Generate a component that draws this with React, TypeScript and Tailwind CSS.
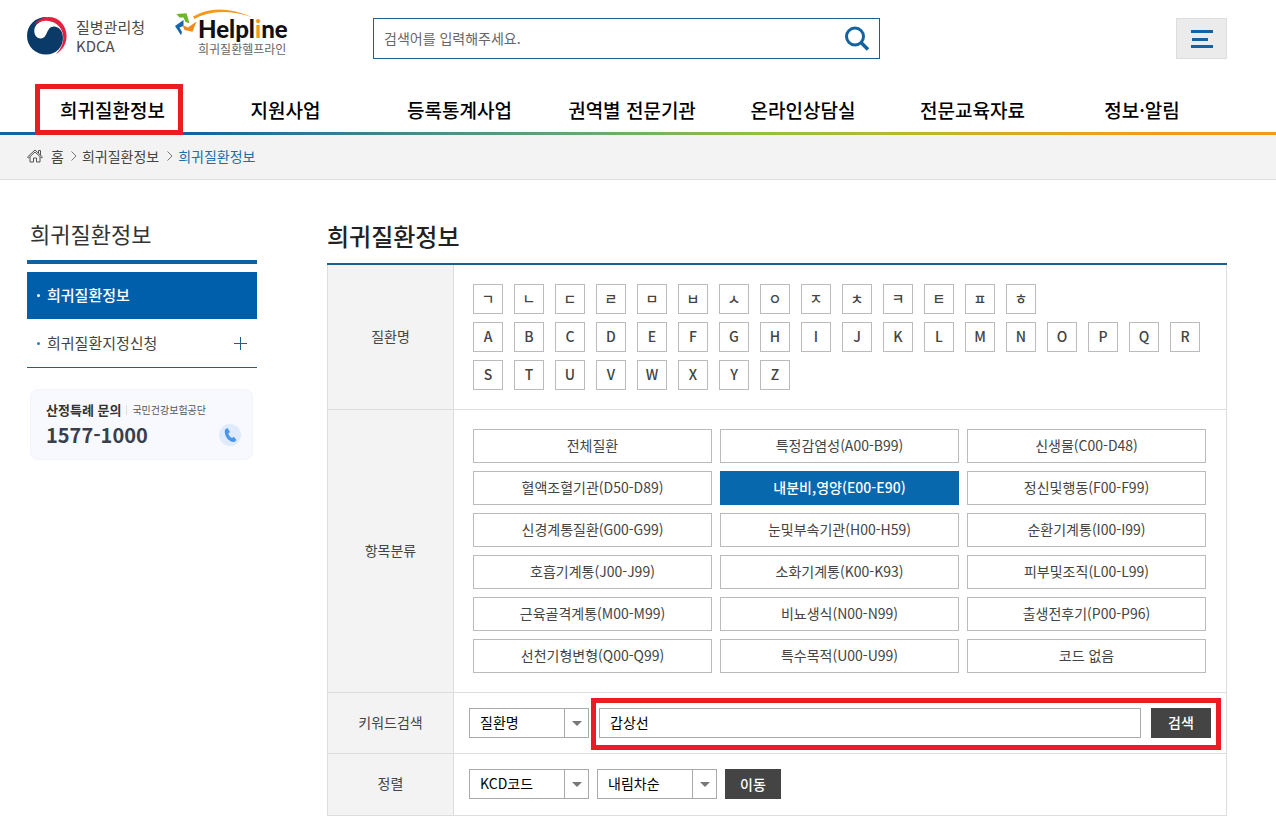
import { type ReactNode } from "react";

const NAV = [
  "희귀질환정보",
  "지원사업",
  "등록통계사업",
  "권역별 전문기관",
  "온라인상담실",
  "전문교육자료",
  "정보·알림",
];

const LETTER_ROWS = ["ㄱㄴㄷㄹㅁㅂㅅㅇㅈㅊㅋㅌㅍㅎ", "ABCDEFGHIJKLMNOPQR", "STUVWXYZ"];

const CATEGORIES = [
  "전체질환",
  "특정감염성(A00-B99)",
  "신생물(C00-D48)",
  "혈액조혈기관(D50-D89)",
  "내분비,영양(E00-E90)",
  "정신및행동(F00-F99)",
  "신경계통질환(G00-G99)",
  "눈및부속기관(H00-H59)",
  "순환기계통(I00-I99)",
  "호흡기계통(J00-J99)",
  "소화기계통(K00-K93)",
  "피부및조직(L00-L99)",
  "근육골격계통(M00-M99)",
  "비뇨생식(N00-N99)",
  "출생전후기(P00-P96)",
  "선천기형변형(Q00-Q99)",
  "특수목적(U00-U99)",
  "코드 없음",
];

const ACTIVE_CATEGORY = "내분비,영양(E00-E90)";

function KdcaLogo() {
  return (
    <a href="#" className="flex items-center gap-[9px]">
      <svg viewBox="0 0 40 40" className="size-10" aria-hidden="true">
        <path
          d="M20 1C8 1 0 9 0 20C0 31 9 38.5 19 38.5C29 38.5 36 31 36 22C36 14 31 10.5 27 10.5C19 10.5 21 22 14 22.5C8 22.5 6 16 8 11C10 7 14 5 18 4Z"
          fill="#0a3a68"
        />
        <path d="M7 9C13 0 26-2 34 6C43 16 41 31 29 38C38 29 39 16 30 8.5C23 3 13 4 7 9Z" fill="#e6213f" />
      </svg>
      <span className="flex flex-col text-[15px] leading-[19px] text-[#4a4a4a]">
        <span>질병관리청</span>
        <span>KDCA</span>
      </span>
    </a>
  );
}

function HelplineLogo() {
  return (
    <a href="#" className="relative block pt-[6px] pl-[26px]">
      <svg viewBox="0 0 120 48" className="absolute top-0 left-0 h-12 w-[120px] overflow-visible" aria-hidden="true">
        <path d="M21 6.500Q46-8 81 7.500Q46-4 22.500 9Z" fill="#f39a1d" />
        <path d="M4.500 4L14.500 3.300L17.500 13.300L13.500 12L11.500 7.500L7.500 7.500Z" fill="#6fb52c" />
        <path d="M11.500 10L3 16L9 25.300L10 22L7.500 17.500L11.500 16Z" fill="#1566ae" />
        <path d="M10.500 15L16 17.500L24.500 11.500L20.500 21.700L12.500 20Z" fill="#f08a1c" />
      </svg>
      <span className="block font-['Lato'] text-[24px] leading-[26px] font-black text-[#111]">
        Helpl<span className="text-[#f39a1d]">i</span>ne
      </span>
      <span className="block text-[12px] leading-[14px] text-[#666]">희귀질환헬프라인</span>
    </a>
  );
}

function Header() {
  return (
    <header>
      <div className="flex h-[84px] items-start pr-[49px] pl-[27px]">
        <div className="flex w-[346px] gap-[27px]">
          <div className="pt-4">
            <KdcaLogo />
          </div>
          <div className="pt-[10px]">
            <HelplineLogo />
          </div>
        </div>
        <form className="mt-[18px] flex h-[41px] w-[507px] items-center border border-[#1b5f8c]">
          <input
            type="text"
            aria-label="검색어"
            placeholder="검색어를 입력해주세요."
            className="h-full min-w-0 flex-1 px-[10px] pb-[2px] text-[14px] outline-none placeholder:text-[#666]"
          />
          <button type="button" aria-label="검색" className="pr-[9px] pl-[11px]">
            <svg viewBox="0 0 26 26" className="size-[26px]" fill="none" stroke="#1463a0" aria-hidden="true">
              <circle cx="11" cy="10.500" r="8.500" strokeWidth="3" />
              <path d="M17 16.500L24 23.500" strokeWidth="3.500" />
            </svg>
          </button>
        </form>
        <button
          type="button"
          aria-label="전체메뉴"
          className="mt-[18px] ml-auto flex h-[41px] w-[51px] items-center justify-center border border-[#ddd] bg-[#ebebeb]"
        >
          <svg viewBox="0 0 22 18" className="h-[18px] w-[22px]" fill="#1463a0" aria-hidden="true">
            <path d="M0 0H22V3H0ZM1 8H17V11H1ZM0 15H22V18H0Z" />
          </svg>
        </button>
      </div>
      <nav className="grid h-12 grid-cols-[171fr_175fr_173fr_172fr_170fr_169fr_170fr] pr-[49px] pl-[27px]">
        {NAV.map((label, index) => (
          <a
            key={label}
            href="#"
            className="relative flex items-center justify-center pt-1 text-[19px] font-medium text-black"
          >
            {label}
            {index === 0 && (
              <span className="absolute top-0 -bottom-[3px] left-2 z-10 w-[148px] border-[5px] border-[#ec1c24]"></span>
            )}
          </a>
        ))}
      </nav>
      <div className="h-[3px] bg-linear-to-r from-[#1463a0] from-15% via-[#8fc33a] via-60% to-[#f39a1d] to-90%"></div>
    </header>
  );
}

function Chevron() {
  return (
    <svg viewBox="0 0 6 10" className="h-[10px] w-[6px]" fill="none" stroke="#777" aria-hidden="true">
      <path d="M.5 .5L5 5L.5 9.500" />
    </svg>
  );
}

function Breadcrumb() {
  return (
    <div className="flex h-[45px] items-center border-b border-[#ddd] bg-[#f3f3f3] pr-[49px] pb-[2px] pl-[27px] text-[14px] text-[#444]">
      <svg viewBox="0 0 16 14" className="mr-2 h-[14px] w-4" fill="none" stroke="#555" aria-hidden="true">
        <path d="M.5 8L8 1L15.500 8L14.500 9L8 3L1.500 9ZM11.500 4V1.500H13.500V6M3 8V13H6.500V9H9.500V13H13V8" />
      </svg>
      <a href="#" className="mr-[7px]">홈</a>
      <Chevron />
      <a href="#" className="mr-2 ml-[5px]">희귀질환정보</a>
      <Chevron />
      <a href="#" className="ml-[5px] text-[#1b6fa8]">희귀질환정보</a>
    </div>
  );
}

function Sidebar() {
  return (
    <aside className="w-[230px] shrink-0">
      <h2 className="border-b-4 border-[#0f619f] pb-3 pl-[3px] text-[22px] leading-[30px] text-[#333]">
        희귀질환정보
      </h2>
      <ul className="mt-2 text-[15px]">
        <li>
          <a href="#" className="flex h-[47px] items-center gap-[7px] bg-[#005fab] px-[10px] font-medium text-white">
            <span className="size-[3px] rounded-full bg-white"></span>
            희귀질환정보
          </a>
        </li>
        <li>
          <a href="#" className="flex h-[49px] items-center gap-[7px] border-b border-[#1b5f8c] px-[10px] text-[#444]">
            <span className="size-[3px] rounded-full bg-[#2f7cb8]"></span>
            희귀질환지정신청
            <svg viewBox="0 0 13 13" className="ml-auto size-[13px]" stroke="#1b5f8c" aria-hidden="true">
              <path d="M6.500 0V13M0 6.500H13" />
            </svg>
          </a>
        </li>
      </ul>
      <div className="mr-1 ml-[3px] mt-[21px] flex h-[71px] flex-col justify-center rounded-lg border border-[#f3f4fa] bg-[#f8f9fe] pr-[11px] pl-[15px]">
        <p className="flex items-center gap-[5px] text-[13px] leading-5 font-bold text-[#333]">
          산정특례 문의
          <span className="h-[10px] w-px bg-[#ddd]"></span>
          <span className="text-[10px] font-normal text-[#555]">국민건강보험공단</span>
        </p>
        <p className="flex items-center justify-between text-[20px] leading-[30px] font-bold text-[#3a3f4a]">
          1577-1000
          <svg viewBox="0 0 22 22" className="size-[22px]" aria-hidden="true">
            <circle cx="11" cy="11" r="11" fill="#dfebfa" />
            <path
              d="M6 5.500L8.500 4L11 8L9.300 9.500C10 11.500 11.300 13 13 14L14.800 12.800L17.500 16L15.500 18C9.500 18.500 4.500 11 6 5.500Z"
              fill="#4a97ea"
            />
          </svg>
        </p>
      </div>
    </aside>
  );
}

function Row({ label, children }: { label: string; children: ReactNode }) {
  return (
    <tr className="border-b border-[#ddd]">
      <th scope="row" className="w-[126px] border-r border-[#ddd] bg-[#f3f3f3] pb-[2px] text-[14px] font-normal text-[#444]">
        {label}
      </th>
      <td className="p-0">{children}</td>
    </tr>
  );
}

function Select({ label, value }: { label: string; value: string }) {
  return (
    <div className="relative h-[30px] w-[120px]">
      <select
        aria-label={label}
        className="h-full w-full appearance-none border border-[#aaa] bg-white pb-[2px] pl-[10px] text-[14px] text-black"
      >
        <option>{value}</option>
      </select>
      <span className="pointer-events-none absolute inset-y-0 right-0 flex w-[25px] items-center justify-center border-l border-[#aaa]">
        <svg viewBox="0 0 10 5" className="h-[5px] w-[10px]" fill="#777" aria-hidden="true">
          <path d="M0 0H10L5 5Z" />
        </svg>
      </span>
    </div>
  );
}

function SearchTable() {
  return (
    <table className="w-full border-collapse border-x border-t-2 border-[#ddd] border-t-[#1b5f8c]">
      <tbody>
        <Row label="질환명">
          <div className="flex flex-col gap-2 py-[19px] pl-[19px]">
            {LETTER_ROWS.map((row) => (
              <div key={row} className="flex gap-[11px]">
                {row.split("").map((letter) => (
                  <button
                    key={letter}
                    type="button"
                    className="size-[30px] border border-[#bbb] pb-[2px] text-[14px] font-medium text-[#444]"
                  >
                    {letter}
                  </button>
                ))}
              </div>
            ))}
          </div>
        </Row>
        <Row label="항목분류">
          <div className="grid grid-cols-3 gap-2 py-[19px] pr-5 pl-[19px]">
            {CATEGORIES.map((category) => (
              <button
                key={category}
                type="button"
                className={`h-[34px] border pb-[2px] text-[14px] ${category === ACTIVE_CATEGORY ? "border-[#0768ae] bg-[#0768ae] font-medium text-white" : "border-[#bbb] text-[#444]"}`}
              >
                {category}
              </button>
            ))}
          </div>
        </Row>
        <Row label="키워드검색">
          <div className="flex items-start pt-[5px] pr-[5px] pb-[3px] pl-[15px]">
            <div className="pt-[10px]">
              <Select label="검색 구분" value="질환명" />
            </div>
            <div className="ml-[2px] flex flex-1 gap-[10px] border-[5px] border-[#ec1c24] pt-[5px] pr-[5px] pb-[7px] pl-[3px]">
              <input
                type="text"
                aria-label="키워드"
                defaultValue="갑상선"
                className="h-[30px] min-w-0 flex-1 border border-[#aaa] px-[10px] pb-[2px] text-[14px] text-black outline-none"
              />
              <button type="button" className="h-[30px] w-[60px] bg-[#444] pb-[2px] text-[14px] font-medium text-white">
                검색
              </button>
            </div>
          </div>
        </Row>
        <Row label="정렬">
          <div className="flex gap-2 pt-[15px] pb-4 pl-[15px]">
            <Select label="정렬 기준" value="KCD코드" />
            <Select label="정렬 순서" value="내림차순" />
            <button type="button" className="h-[30px] w-14 bg-[#444] text-[14px] font-medium text-white">
              이동
            </button>
          </div>
        </Row>
      </tbody>
    </table>
  );
}

export default function App() {
  return (
    <div lang="ko" className="bg-white font-['Noto_Sans_CJK_KR',sans-serif]">
      <Header />
      <Breadcrumb />
      <div className="flex gap-[70px] pt-[38px] pr-[49px] pl-[27px]">
        <Sidebar />
        <main className="min-w-0 flex-1">
          <h1 className="pb-[9px] text-[24px] leading-9 font-medium text-[#222]">희귀질환정보</h1>
          <SearchTable />
        </main>
      </div>
    </div>
  );
}
